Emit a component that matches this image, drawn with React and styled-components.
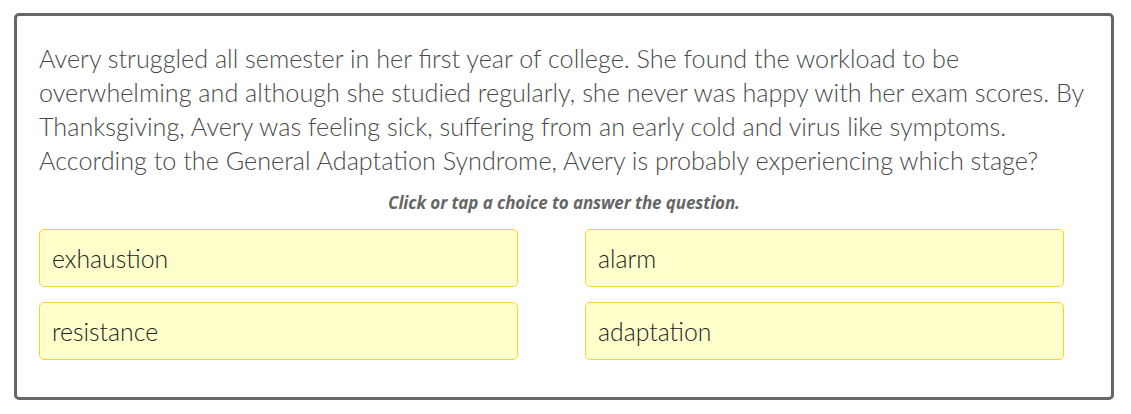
import React from 'react'
import styled, { createGlobalStyle } from 'styled-components'

const Global = createGlobalStyle`
  html, body { margin: 0; padding: 0; background: #fff; }
  body { font-family: Lato, "Open Sans", sans-serif; }
`

const Frame = styled.div`
  box-sizing: border-box;
  margin: 13px 0 0 14px;
  width: 1100px;
  height: 387px;
  border: 3px solid #666;
  border-radius: 5px;
  padding: 25px 22px 0 22px;
`

const Question = styled.p`
  margin: 0;
  font-size: 25.2px;
  line-height: 34px;
  color: #4a4a4a;
  font-weight: 300;
`

const Hint = styled.div`
  margin-top: 16px;
  text-align: center;
  font-family: "Open Sans", sans-serif;
  font-size: 17px;
  font-weight: 700;
  font-style: italic;
  color: #666;
  line-height: 20px;
  letter-spacing: -0.1px;
`

const Choices = styled.div`
  display: grid;
  grid-template-columns: 479px 479px;
  column-gap: 67px;
  row-gap: 15px;
  margin-top: 16px;
`

const Choice = styled.button`
  box-sizing: border-box;
  height: 58px;
  background: #ffffcc;
  border: 1px solid #ffd036;
  border-radius: 5px;
  padding: 0 12px;
  text-align: left;
  font-family: Lato, "Open Sans", sans-serif;
  font-weight: 300;
  font-size: 24.8px;
  color: #222;
  cursor: pointer;
`

const options = ['exhaustion', 'alarm', 'resistance', 'adaptation']

export default function App() {
  return (
    <>
      <Global />
      <Frame>
        <Question>
          Avery struggled all semester in her first year of college. She found the workload to be<br />
          overwhelming and although she studied regularly, she never was happy with her exam scores. By<br />
          Thanksgiving, Avery was feeling sick, suffering from an early cold and virus like symptoms.<br />
          According to the General Adaptation Syndrome, Avery is probably experiencing which stage?
        </Question>
        <Hint>Click or tap a choice to answer the question.</Hint>
        <Choices>
          {options.map((o) => (
            <Choice key={o}>{o}</Choice>
          ))}
        </Choices>
      </Frame>
    </>
  )
}
